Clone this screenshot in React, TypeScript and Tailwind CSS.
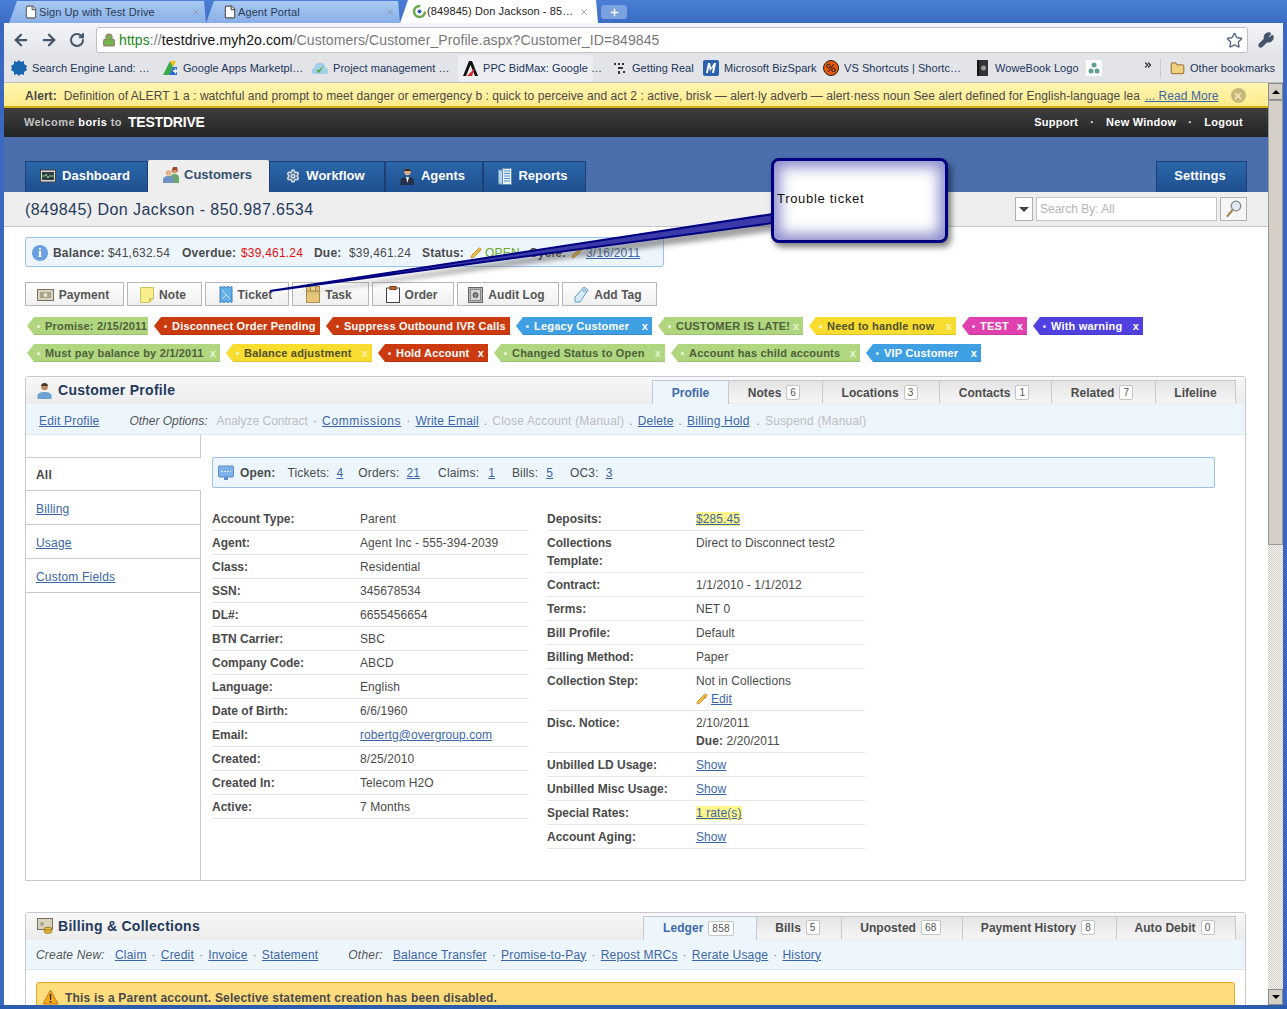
import React from "react";
import { ArrowLeft, ArrowRight, RotateCw, Star, Wrench, Settings, Plus, X, Pencil, File, Lock, Folder, ChevronsRight } from "lucide-react";

const Link = ({ children, className = "" }: { children: React.ReactNode; className?: string }) => (
  <span className={`text-[#3a66a8] underline ${className}`}>{children}</span>
);

const ChromeTab = ({ w, pl, active, icon, label, close }: { w: string; pl: string; active?: boolean; icon: React.ReactNode; label: string; close: string }) => (
  <div className={`${w} ${pl} flex shrink-0 items-center text-[11px] tracking-[0.1px] [clip-path:polygon(0_100%,8px_0,calc(100%-2px)_0,100%_100%)] ${active ? "h-[23px] bg-white text-[#222]" : "h-[22px] bg-gradient-to-b from-[#a9c9f2] to-[#88afe6] text-[#2b3a55]"}`}>
    <span className="flex w-[16px] shrink-0 justify-center">{icon}</span>
    <span className="truncate">{label}</span>
    <X size={10} strokeWidth={2} className={`ml-auto ${close} shrink-0 text-[#8a98ac]`} />
  </div>
);

const Bookmark = ({ w, icon, label, className = "" }: { w: string; icon: React.ReactNode; label: string; className?: string }) => (
  <div className={`${w} flex shrink-0 items-center gap-[5px] whitespace-nowrap text-[11px] tracking-[0.05px] text-[#20345a] ${className}`}>
    <span className="flex w-[16px] shrink-0 justify-center">{icon}</span>
    {label && <span>{label}</span>}
  </div>
);

const NavTab = ({ w, icon, label, active }: { w: string; icon: React.ReactNode; label: string; active?: boolean }) => (
  <div className={`${w} flex shrink-0 items-center justify-center gap-[6px] pb-[2px] pr-[3px] text-[13px] font-bold ${active ? "h-[32px] rounded-t-[2px] bg-[#eeeeee] text-[#35506f]" : "h-[31px] border border-b-0 border-[#1d3f72] bg-gradient-to-b from-[#2b67a9] to-[#1f4f90] text-white"}`}>
    {icon}
    <span>{label}</span>
  </div>
);

const ActionBtn = ({ w, icon, label }: { w: string; icon: React.ReactNode; label: string }) => (
  <div className={`${w} flex h-[24px] shrink-0 items-center justify-center gap-[5px] border border-[#bbb6b6] bg-gradient-to-b from-white to-[#f0f0f0] pr-[3px] pt-[1px] text-[12px] font-bold tracking-[0.05px] text-[#555]`}>
    {icon}
    <span>{label}</span>
  </div>
);

const Tag = ({ w, label, color, x }: { w: string; label: string; color: string; x?: string }) => (
  <div className={`${w} ${color} flex h-[18px] shrink-0 items-center whitespace-nowrap border-b border-black/10 pt-[1px] text-[11px] font-bold tracking-[0.2px] [clip-path:polygon(7px_0,100%_0,100%_100%,7px_100%,0_50%)]`}>
    <span className="ml-[10px] h-[3px] w-[3px] shrink-0 rounded-full bg-white/80" />
    <span className="ml-[5px]">{label}</span>
    {x && <span className={`ml-auto mr-[4px] ${x}`}>x</span>}
  </div>
);

const Badge = ({ n }: { n: string }) => (
  <span className="ml-[5px] flex h-[15px] items-center rounded-[2px] border border-[#c4c4c4] bg-white px-[3px] text-[10px] font-normal tracking-[0.3px] text-[#555]">{n}</span>
);

const PanelTab = ({ w, label, n, active, high }: { w: string; label: string; n?: string; active?: boolean; high?: boolean }) => (
  <div className={`${w} flex shrink-0 items-center justify-center border-r border-[#c8c8d0] text-[12px] font-bold tracking-[0.05px] ${high ? "pb-[1px]" : "pt-[1px]"} ${n ? "pr-[3px]" : ""} ${active ? "h-[24px] border-l border-t bg-[#eef6fd] text-[#3f6aa8]" : "h-[23px] border-t bg-gradient-to-b from-[#e4e4e4] to-[#f6f6f6] text-[#4c4c4c]"}`}>
    <span>{label}</span>
    {n && <Badge n={n} />}
  </div>
);

const Row = ({ label, value, tall, w, lw }: { label: React.ReactNode; value: React.ReactNode; tall?: boolean; w: string; lw: string }) => (
  <div className={`${w} flex border-b border-[#e6e6e6] text-[12px] leading-[18px] tracking-[0.09px] text-[#4a4a4a] ${tall ? "h-[42px] pt-[3px]" : "h-[24px] pt-[3px]"}`}>
    <div className={`${lw} shrink-0 pr-[4px] font-bold tracking-[0px]`}>{label}</div>
    <div>{value}</div>
  </div>
);

const Sep = ({ c = "·" }: { c?: string }) => <span className="mx-[5px] text-[#888]">{c}</span>;

const MonitorIcon = () => (
  <svg width="16" height="14" viewBox="0 0 16 14"><rect x="0.500" y="1" width="15" height="12" fill="#d8d8d8" stroke="#444" /><rect x="2" y="3" width="12" height="8" fill="#2f3d3f" /><path d="M2 7h3l1-2 2 4 1-2h5" fill="none" stroke="#7fd08c" /></svg>
);
const PeopleIcon = () => (
  <svg width="19" height="18" viewBox="0 0 19 18"><circle cx="12.500" cy="4.500" r="3" fill="#d99a6c" /><path d="M11 1h4l1 5-2-2h-2l-2 2z" fill="#9a4a2a" /><path d="M8 17v-5c0-3 2-4 4.500-4S17 9 17 12v5z" fill="#68a86a" /><circle cx="6.500" cy="7" r="2.800" fill="#e0b088" /><path d="M1 17v-3c0-3 2-4 5.500-4S12 11 12 14v3z" fill="#6f94c4" /></svg>
);
const AgentIcon = () => (
  <svg width="15" height="17" viewBox="0 0 15 17"><circle cx="7.500" cy="4" r="3.200" fill="#e0ae88" /><path d="M4 3c0-3 7-3 7 0z" fill="#332" /><path d="M0.500 17v-4c0-3 3-4 7-4s6.500 1 6.500 4v4z" fill="#27304a" /><path d="M6 9h3l-1.500 6z" fill="#fff" /></svg>
);
const ReportIcon = () => (
  <svg width="14" height="17" viewBox="0 0 14 17"><rect x="0.500" y="2" width="4" height="14" fill="#b7d4ec" stroke="#6c96bb" /><rect x="4.500" y="0.500" width="9" height="16" fill="#e8f2fa" stroke="#5f8fb8" /><path d="M6 3h6M6 5.500h6M6 8h6M6 10.500h6M6 13h6" stroke="#4f8fc8" strokeWidth="1.200" /></svg>
);
const CashIcon = () => (
  <svg width="17" height="12" viewBox="0 0 17 12"><rect x="0.500" y="0.500" width="16" height="11" fill="#d9d3bd" stroke="#77725f" /><rect x="3" y="3" width="11" height="6" fill="#a9a489" /><circle cx="8.500" cy="6" r="2" fill="#e8e4d2" /></svg>
);
const NoteIcon = () => (
  <svg width="14" height="16" viewBox="0 0 14 16"><path d="M0.500 0.500h13v11l-4 4h-9z" fill="#f8ee8c" stroke="#cfc25c" /><path d="M9.500 15.500v-4h4" fill="#e0d468" stroke="#cfc25c" /></svg>
);
const TicketIcon = () => (
  <svg width="14" height="17" viewBox="0 0 14 17"><path d="M1 .5l2 1 2-1 2 1 2-1 2 1 2-1v16l-2-1-2 1-2-1-2 1-2-1-2 1z" fill="#62aee8" stroke="#3f7fb8" /><path d="M3 4l8 9M3 13l4-4" stroke="#cbe6fa" /></svg>
);
const TaskIcon = () => (
  <svg width="14" height="17" viewBox="0 0 14 17"><rect x="0.500" y="0.500" width="13" height="16" fill="#e8c878" stroke="#a98e4c" /><path d="M0.500 5h13" stroke="#a98e4c" /><path d="M4.500 0.500v4.500h5v-4.500" fill="#f3dc9c" stroke="#a98e4c" /></svg>
);
const OrderIcon = () => (
  <svg width="14" height="17" viewBox="0 0 14 17"><rect x="0.500" y="2" width="13" height="14.500" fill="#fff" stroke="#444" /><rect x="4" y="0.500" width="6" height="3" fill="#c9672a" stroke="#7a3c16" /></svg>
);
const SafeIcon = () => (
  <svg width="15" height="16" viewBox="0 0 15 16"><rect x="0.500" y="0.500" width="14" height="15" fill="#b5b5b5" stroke="#666" /><rect x="2.500" y="2.500" width="10" height="11" fill="#d6d6d6" stroke="#888" /><circle cx="7.500" cy="8" r="2.500" fill="#8a8a8a" stroke="#555" /></svg>
);
const TagIcon = () => (
  <svg width="15" height="17" viewBox="0 0 15 17"><path d="M10 1l4 3-8 12-5 0 0-5z" fill="#d6ecfa" stroke="#5f9ccc" /><circle cx="10.500" cy="4.500" r="1.200" fill="#fff" stroke="#5f9ccc" /></svg>
);
const ProfileIcon = () => (
  <svg width="15" height="16" viewBox="0 0 15 16"><circle cx="7.500" cy="4" r="3.300" fill="#b98a62" /><path d="M4 3c0-4 7-4 7 0z" fill="#4a3526" /><path d="M0.500 16v-3c0-3 3-4 7-4s7 1 7 4v3z" fill="#6ea3cf" /></svg>
);
const BillingIcon = () => (
  <svg width="16" height="16" viewBox="0 0 16 16"><rect x="0.500" y="0.500" width="15" height="11" fill="#d9d3bd" stroke="#77725f" /><circle cx="5" cy="6" r="2" fill="#a9a489" /><ellipse cx="11" cy="11" rx="4" ry="1.800" fill="#e5b93f" stroke="#a67e1c" /><ellipse cx="11" cy="13.500" rx="4" ry="1.800" fill="#e5b93f" stroke="#a67e1c" /></svg>
);
const GreenPencil = () => <Pencil size={12} strokeWidth={1.500} className="shrink-0 fill-[#f0c040] text-[#c07a20]" />;

export default function App() {
  return (
    <div className="relative flex h-[1009px] w-[1287px] flex-col overflow-hidden bg-[#3a68c0] font-['Liberation_Sans',Arial,sans-serif]">
      {/* Chrome tab strip */}
      <div className="flex h-[23px] shrink-0 items-end bg-gradient-to-b from-[#4a7ed4] to-[#3a6cc4] pl-[9px]">
        <ChromeTab w="w-[197px]" pl="pl-[14px]" icon={<File size={14} className="fill-white text-[#666]" />} label="Sign Up with Test Drive" close="mr-[5px]" />
        <ChromeTab w="w-[194px]" pl="pl-[16px]" icon={<File size={14} className="fill-white text-[#555]" />} label="Agent Portal" close="mr-[5px]" />
        <ChromeTab
          w="w-[198px]"
          pl="pl-[11px]"
          active
          icon={
            <svg width="15" height="15" viewBox="0 0 15 15"><circle cx="7.500" cy="7.500" r="5.500" fill="none" stroke="#6aa84a" strokeWidth="2.500" strokeDasharray="26 8" /><circle cx="7.500" cy="7.500" r="2" fill="#2a62b8" /></svg>
          }
          label="(849845) Don Jackson - 85…"
          close="mr-[9px]"
        />
        <div className="mb-[4px] ml-[3px] flex h-[14px] w-[26px] items-center justify-center rounded-[3px] bg-[#7aa2e0]">
          <Plus size={11} strokeWidth={3} className="text-white" />
        </div>
      </div>

      {/* Window inner */}
      <div className="mx-[4px] flex min-h-0 flex-1 flex-col">
        {/* Toolbar */}
        <div className="flex h-[31px] shrink-0 items-center bg-gradient-to-b from-[#f4f5f8] to-[#e4e5ea] pt-[3px]">
          <ArrowLeft size={18} strokeWidth={3} className="ml-[8px] text-[#44546a]" />
          <ArrowRight size={18} strokeWidth={3} className="ml-[10px] text-[#44546a]" />
          <RotateCw size={16} strokeWidth={3} className="ml-[11px] text-[#44546a]" />
          <div className="ml-[11px] flex h-[26px] w-[1152px] items-center rounded-[3px] border border-[#bcc0c8] bg-white">
            <Lock size={14} strokeWidth={2.500} className="ml-[5px] fill-[#74b84c] text-[#8a8a6a]" />
            <div className="ml-[3px] whitespace-nowrap pt-[1px] text-[14px] tracking-[0.09px] text-[#777]">
              <span className="text-[#1a8a1a]">https</span>
              <span>://</span>
              <span className="text-[#111]">testdrive.myh2o.com</span>
              <span>/Customers/Customer_Profile.aspx?Customer_ID=849845</span>
            </div>
            <Star size={17} strokeWidth={2} className="ml-auto mr-[4px] text-[#5a6a80]" />
          </div>
          <Wrench size={16} strokeWidth={3} className="ml-[10px] fill-[#44546a] text-[#44546a]" />
        </div>

        {/* Bookmarks */}
        <div className="flex h-[29px] shrink-0 items-center border-b border-[#bdbdbd] bg-[#e3e4e8] pl-[7px]">
          <Bookmark w="w-[151px]" label="Search Engine Land: …" icon={<svg width="16" height="16" viewBox="0 0 16 16"><path d="M8 0l2 2 3-1 0 3 3 2-1 2 1 2-3 2 0 3-3-1-2 2-2-2-3 1 0-3-3-2 1-2-1-2 3-2 0-3 3 1z" fill="#1a66b0" /></svg>} />
          <Bookmark w="w-[150px]" label="Google Apps Marketpl…" icon={<svg width="16" height="16" viewBox="0 0 16 16"><path d="M1 15l7-14 3 6-4 8z" fill="#3aa84a" /><path d="M8 1h6l-3 6z" fill="#f4c20d" /><path d="M7 15l4-8h4v8z" fill="#2a6ad0" /><path d="M11 11h5M13.500 8.500v5" stroke="#fff" strokeWidth="1.500" /></svg>} />
          <Bookmark w="w-[146px]" label="Project management …" icon={<svg width="16" height="14" viewBox="0 0 16 14"><path d="M3 13a3 3 0 01-.5-6 5.500 5.500 0 0111 0 3 3 0 01-.5 6z" fill="#9fd0e6" /><path d="M4 9l3 3 5-7-5 4z" fill="#5aa83a" /></svg>} />
          <Bookmark w="w-[135px]" className="h-[27px] rounded-[3px] bg-[#eceef2] pl-[4px]" label="PPC BidMax: Google …" icon={<svg width="15" height="15" viewBox="0 0 15 15"><path d="M0 15L6 0h3l6 15h-3L7.500 4 3 15z" fill="#111" /><path d="M4 15l8-8-3 8z" fill="#d22" /></svg>} />
          <Bookmark w="w-[110px]" className="pl-[18px]" label="Getting Real" icon={<svg width="13" height="13" viewBox="0 0 13 13"><path d="M1 1h2v2H1zM5 1h2v2H5zM9 1h2v2H9zM5 5h5v2H5zM5 9h2v3H5zM10 9h2v2h-2z" fill="#333" /></svg>} />
          <Bookmark w="w-[120px]" label="Microsoft BizSpark" icon={<svg width="16" height="16" viewBox="0 0 16 16"><rect width="16" height="16" rx="2" fill="#2a62b0" /><path d="M3 13l2-10h2l1 5 3-5h2l-2 10h-2l1-6-3 4-1-4-1 6z" fill="#fff" /></svg>} />
          <Bookmark w="w-[151px]" label="VS Shortcuts | Shortc…" icon={<svg width="16" height="16" viewBox="0 0 16 16"><circle cx="8" cy="8" r="7.500" fill="#e85a08" stroke="#222" /><circle cx="5.500" cy="6" r="1.800" fill="none" stroke="#222" /><circle cx="10.500" cy="10" r="1.800" fill="none" stroke="#222" /><path d="M11 4L5 12" stroke="#222" /></svg>} />
          <Bookmark w="w-[112px]" label="WoweBook Logo" icon={<svg width="13" height="16" viewBox="0 0 13 16"><rect x="1" width="11" height="16" fill="#333" /><rect x="1" width="2" height="16" fill="#111" /><circle cx="7.500" cy="8" r="2.500" fill="#999" /></svg>} />
          <Bookmark w="w-[57px]" label="" icon={<svg width="16" height="16" viewBox="0 0 16 16"><rect width="16" height="16" fill="#fff" /><circle cx="8" cy="5" r="2.500" fill="#5f9f94" /><circle cx="5" cy="11" r="2.500" fill="#5f9f94" /><circle cx="11" cy="11" r="2.500" fill="#5f9f94" /></svg>} />
          <ChevronsRight size={10} strokeWidth={3} className="mb-[6px] text-[#222]" />
          <div className="ml-[7px] mr-[8px] h-[19px] w-px bg-[#c9c9cc]" />
          <Bookmark w="w-[106px]" label="Other bookmarks" icon={<Folder size={15} className="fill-[#f5cf80] text-[#a08248]" />} />
        </div>

        {/* Viewport */}
        <div className="flex min-h-0 flex-1">
          <div className="flex min-w-0 flex-1 flex-col overflow-hidden bg-white">
            {/* Alert */}
            <div className="flex h-[25px] shrink-0 items-center whitespace-nowrap border-b-2 border-[#d9ad12] bg-gradient-to-b from-[#fff6b0] to-[#ffeb8c] pl-[21px] pt-[2px] text-[12px] tracking-[0.07px] text-[#4a4a4a]">
              <span className="mr-[7px] font-bold">Alert:</span>
              <span>Definition of ALERT 1 a : watchful and prompt to meet danger or emergency b : quick to perceive and act 2 : active, brisk — alert·ly adverb — alert·ness noun See alert defined for English-language lea</span>
              <span className="ml-[5px] text-[#3a66a8] underline">... Read More</span>
              <span className="ml-[12px] flex h-[15px] w-[15px] items-center justify-center rounded-full bg-[#c8b878]">
                <X size={10} strokeWidth={3.500} className="text-[#f4eed0]" />
              </span>
            </div>
            {/* Dark bar */}
            <div className="flex h-[29px] shrink-0 items-center bg-gradient-to-b from-[#3e3e3e] to-[#232425] pl-[20px] pr-[25px]">
              <span className="text-[11px] font-bold tracking-[0.4px] text-[#c4c4c4]">Welcome <span className="text-white">boris</span> to</span>
              <span className="ml-[6px] text-[14px] font-bold tracking-[-0.2px] text-white">TESTDRIVE</span>
              <div className="ml-auto flex items-center text-[11px] font-bold tracking-[0.25px] text-white">
                <span>Support</span>
                <span className="mx-[12px]">·</span>
                <span>New Window</span>
                <span className="mx-[12px]">·</span>
                <span>Logout</span>
              </div>
            </div>
            {/* Blue band with nav tabs */}
            <div className="flex h-[55px] shrink-0 items-end bg-[#4a6fac] pl-[21px] pr-[21px]">
              <NavTab w="w-[123px]" label="Dashboard" icon={<MonitorIcon />} />
              <NavTab w="w-[121px]" active label="Customers" icon={<span className="-mr-[3px] flex"><PeopleIcon /></span>} />
              <NavTab w="w-[116px]" label="Workflow" icon={<Settings size={14} strokeWidth={3} className="text-[#d8d8d8]" />} />
              <NavTab w="w-[98px]" label="Agents" icon={<AgentIcon />} />
              <NavTab w="w-[103px]" label="Reports" icon={<ReportIcon />} />
              <div className="ml-auto">
                <NavTab w="w-[91px]" label="Settings" icon={null} />
              </div>
            </div>
            {/* Title bar */}
            <div className="flex h-[35px] shrink-0 items-center border-b border-[#c9c7cc] bg-[#eeeeee] pl-[21px] pr-[21px]">
              <span className="pt-[1px] text-[16px] tracking-[0.44px] text-[#1f3a5c]">(849845) Don Jackson - 850.987.6534</span>
              <div className="ml-auto flex items-center">
                <div className="flex h-[24px] w-[18px] items-center justify-center border border-[#b5b0b0] bg-white">
                  <span className="h-0 w-0 border-x-[5px] border-t-[5px] border-x-transparent border-t-[#444]" />
                </div>
                <div className="ml-[3px] flex h-[24px] w-[181px] items-center border border-[#c8c4c4] bg-white pl-[3px] text-[12px] text-[#b5b5b5]">Search By: All</div>
                <div className="ml-[3px] flex h-[24px] w-[27px] items-center justify-center border border-[#b5b0b0] bg-[#f6f6f6]">
                  <svg width="16" height="18" viewBox="0 0 16 18"><circle cx="10" cy="6" r="4.800" fill="#dfeaf2" stroke="#8b8b8b" strokeWidth="1.300" /><path d="M6.500 10L1.500 16" stroke="#a88a5a" strokeWidth="2.200" strokeLinecap="round" /></svg>
                </div>
              </div>
            </div>

            {/* Body */}
            <div className="flex flex-col pl-[21px] pr-[21px]">
              {/* Info */}
              <div className="mt-[10px] flex h-[30px] w-[639px] items-center whitespace-nowrap rounded-[3px] border border-[#9cc2ea] bg-[#eef6fd] pl-[6px] pt-[1px] text-[12px] tracking-[0.2px] text-[#4a4a4a]">
                <span className="flex h-[16px] w-[16px] shrink-0 items-center justify-center rounded-full bg-[#6c9fe0] font-['Liberation_Serif',serif] text-[13px] font-bold text-white">i</span>
                <b className="ml-[5px] w-[55px] shrink-0">Balance:</b>
                <span className="w-[74px] shrink-0">$41,632.54</span>
                <b className="w-[59px] shrink-0">Overdue:</b>
                <span className="w-[73px] shrink-0 text-[#e01010]">$39,461.24</span>
                <b className="w-[35px] shrink-0">Due:</b>
                <span className="w-[73px] shrink-0">$39,461.24</span>
                <b className="w-[48px] shrink-0">Status:</b>
                <span className="w-[15px] shrink-0"><GreenPencil /></span>
                <span className="w-[44px] shrink-0 text-[#6aa82a]">OPEN</span>
                <b className="w-[42px] shrink-0">Cycle:</b>
                <span className="w-[15px] shrink-0"><GreenPencil /></span>
                <Link>3/16/2011</Link>
              </div>
              {/* Actions */}
              <div className="mt-[15px] flex gap-[3px]">
                <ActionBtn w="w-[99px]" icon={<CashIcon />} label="Payment" />
                <ActionBtn w="w-[75px]" icon={<NoteIcon />} label="Note" />
                <ActionBtn w="w-[84px]" icon={<TicketIcon />} label="Ticket" />
                <ActionBtn w="w-[77px]" icon={<TaskIcon />} label="Task" />
                <ActionBtn w="w-[82px]" icon={<OrderIcon />} label="Order" />
                <ActionBtn w="w-[102px]" icon={<SafeIcon />} label="Audit Log" />
                <ActionBtn w="w-[95px]" icon={<TagIcon />} label="Add Tag" />
              </div>
              {/* Tags */}
              <div className="ml-[2px] mt-[11px] flex gap-[6px]">
                <Tag w="w-[121px]" color="bg-[#b0d67f] text-[#4f5f3a]" label="Promise: 2/15/2011" />
                <Tag w="w-[166px]" color="bg-[#cc3a10] text-white" label="Disconnect Order Pending" />
                <Tag w="w-[184px]" color="bg-[#cc3a10] text-white" label="Suppress Outbound IVR Calls" />
                <Tag w="w-[136px]" color="bg-[#3f9fe3] text-white" label="Legacy Customer" x="text-white" />
                <Tag w="w-[145px]" color="bg-[#b0d67f] text-[#4f5f3a]" label="CUSTOMER IS LATE!" x="text-[#e6f3d2]" />
                <Tag w="w-[147px]" color="bg-[#f8dc30] text-[#50502a]" label="Need to handle now" x="text-[#fdf3b0]" />
                <Tag w="w-[65px]" color="bg-[#e040b0] text-white" label="TEST" x="text-white" />
                <Tag w="w-[110px]" color="bg-[#5040e0] text-white" label="With warning" x="text-white" />
              </div>
              <div className="ml-[2px] mt-[9px] flex gap-[6px]">
                <Tag w="w-[193px]" color="bg-[#b0d67f] text-[#4f5f3a]" label="Must pay balance by 2/1/2011" x="text-[#e6f3d2]" />
                <Tag w="w-[146px]" color="bg-[#f8dc30] text-[#50502a]" label="Balance adjustment" x="text-[#fdf3b0]" />
                <Tag w="w-[110px]" color="bg-[#cc3a10] text-white" label="Hold Account" x="text-white" />
                <Tag w="w-[171px]" color="bg-[#b0d67f] text-[#4f5f3a]" label="Changed Status to Open" x="text-[#e6f3d2]" />
                <Tag w="w-[189px]" color="bg-[#b0d67f] text-[#4f5f3a]" label="Account has child accounts" x="text-[#e6f3d2]" />
                <Tag w="w-[115px]" color="bg-[#3f9fe3] text-white" label="VIP Customer" x="text-white" />
              </div>

              {/* Customer Profile panel */}
              <div className="mt-[14px] flex h-[505px] w-[1221px] shrink-0 flex-col rounded-t-[3px] border border-[#c8c8d0]">
                <div className="flex h-[27px] shrink-0 items-end bg-gradient-to-b from-[#f8f8f8] to-[#ececec] pr-[9px]">
                  <div className="flex h-full items-center gap-[6px] pl-[11px] text-[14px] font-bold tracking-[0.28px] text-[#1f3a5c]">
                    <ProfileIcon />
                    <span>Customer Profile</span>
                  </div>
                  <div className="ml-auto flex">
                    <PanelTab w="w-[77px]" active label="Profile" />
                    <PanelTab w="w-[94px]" label="Notes" n="6" />
                    <PanelTab w="w-[117px]" label="Locations" n="3" />
                    <PanelTab w="w-[112px]" label="Contacts" n="1" />
                    <PanelTab w="w-[104px]" label="Related" n="7" />
                    <PanelTab w="w-[80px]" label="Lifeline" />
                  </div>
                </div>
                <div className="flex h-[31px] shrink-0 items-center whitespace-nowrap border-b border-[#dfe6ec] bg-[#eef6fd] pl-[13px] pt-[3px] text-[12px] tracking-[0.2px] text-[#bdbdbd]">
                  <Link>Edit Profile</Link>
                  <span className="ml-[30px] mr-[9px] italic tracking-[0px] text-[#555]">Other Options:</span>
                  <span className="tracking-[0px]">Analyze Contract</span>
                  <Sep />
                  <Link className="tracking-[0.65px]">Commissions</Link>
                  <Sep />
                  <Link>Write Email</Link>
                  <Sep c="." />
                  <span>Close Account (Manual)</span>
                  <Sep c="." />
                  <Link>Delete</Link>
                  <Sep c="." />
                  <Link className="mr-[2px]">Billing Hold</Link>
                  <Sep c="." />
                  <span>Suspend (Manual)</span>
                </div>
                <div className="flex min-h-0 flex-1">
                  {/* Sidebar */}
                  <div className="flex w-[175px] shrink-0 flex-col text-[12px] tracking-[0.2px]">
                    <div className="h-[23px] border-b border-r border-[#c8c8d0]" />
                    <div className="flex h-[33px] items-center border-b border-[#c8c8d0] pl-[10px] pt-[2px] font-bold text-[#444]">All</div>
                    <div className="flex h-[34px] items-center border-b border-r border-[#c8c8d0] pl-[10px] pt-[2px]"><Link>Billing</Link></div>
                    <div className="flex h-[34px] items-center border-b border-r border-[#c8c8d0] pl-[10px] pt-[2px]"><Link>Usage</Link></div>
                    <div className="flex h-[34px] items-center border-b border-r border-[#c8c8d0] pl-[10px] pt-[2px]"><Link>Custom Fields</Link></div>
                    <div className="flex-1 border-r border-[#c8c8d0]" />
                  </div>
                  {/* Main */}
                  <div className="min-w-0 flex-1 pl-[11px]">
                    <div className="mt-[22px] flex h-[31px] w-[1003px] items-center rounded-[2px] border border-[#9cc2ea] bg-[#eef6fd] pl-[5px] text-[12px] tracking-[0.15px] text-[#4a4a4a]">
                      <svg width="16" height="16" viewBox="0 0 16 16"><rect x="0.500" y="1" width="15" height="11" rx="1" fill="#7fb2e8" stroke="#5a8fc8" /><path d="M3 6.500h10" stroke="#dceeff" strokeDasharray="2 1" /><path d="M6 12h4v3H6z" fill="#5a8fc8" /></svg>
                      <b className="ml-[6px]">Open:</b>
                      <span className="ml-[12px]">Tickets:</span>
                      <Link className="ml-[7px]">4</Link>
                      <span className="ml-[15px]">Orders:</span>
                      <Link className="ml-[7px]">21</Link>
                      <span className="ml-[18px]">Claims:</span>
                      <Link className="ml-[9px]">1</Link>
                      <span className="ml-[17px]">Bills:</span>
                      <Link className="ml-[8px]">5</Link>
                      <span className="ml-[17px]">OC3:</span>
                      <Link className="ml-[7px]">3</Link>
                    </div>
                    <div className="mt-[19px] flex gap-[18px]">
                      <div className="flex flex-col">
                        <Row w="w-[317px]" lw="w-[148px]" label="Account Type:" value="Parent" />
                        <Row w="w-[317px]" lw="w-[148px]" label="Agent:" value="Agent Inc - 555-394-2039" />
                        <Row w="w-[317px]" lw="w-[148px]" label="Class:" value="Residential" />
                        <Row w="w-[317px]" lw="w-[148px]" label="SSN:" value="345678534" />
                        <Row w="w-[317px]" lw="w-[148px]" label="DL#:" value="6655456654" />
                        <Row w="w-[317px]" lw="w-[148px]" label="BTN Carrier:" value="SBC" />
                        <Row w="w-[317px]" lw="w-[148px]" label="Company Code:" value="ABCD" />
                        <Row w="w-[317px]" lw="w-[148px]" label="Language:" value="English" />
                        <Row w="w-[317px]" lw="w-[148px]" label="Date of Birth:" value="6/6/1960" />
                        <Row w="w-[317px]" lw="w-[148px]" label="Email:" value={<Link>robertg@overgroup.com</Link>} />
                        <Row w="w-[317px]" lw="w-[148px]" label="Created:" value="8/25/2010" />
                        <Row w="w-[317px]" lw="w-[148px]" label="Created In:" value="Telecom H2O" />
                        <Row w="w-[317px]" lw="w-[148px]" label="Active:" value="7 Months" />
                      </div>
                      <div className="flex flex-col">
                        <Row w="w-[318px]" lw="w-[149px]" label="Deposits:" value={<span className="bg-[#fff58a] text-[#3a66a8] underline">$285.45</span>} />
                        <Row w="w-[318px]" lw="w-[149px]" tall label={<>Collections<br />Template:</>} value="Direct to Disconnect test2" />
                        <Row w="w-[318px]" lw="w-[149px]" label="Contract:" value="1/1/2010 - 1/1/2012" />
                        <Row w="w-[318px]" lw="w-[149px]" label="Terms:" value="NET 0" />
                        <Row w="w-[318px]" lw="w-[149px]" label="Bill Profile:" value="Default" />
                        <Row w="w-[318px]" lw="w-[149px]" label="Billing Method:" value="Paper" />
                        <Row w="w-[318px]" lw="w-[149px]" tall label="Collection Step:" value={<>Not in Collections<br /><span className="inline-flex h-[18px] items-center gap-[3px] align-top"><GreenPencil /><Link>Edit</Link></span></>} />
                        <Row w="w-[318px]" lw="w-[149px]" tall label="Disc. Notice:" value={<>2/10/2011<br /><b>Due:</b> 2/20/2011</>} />
                        <Row w="w-[318px]" lw="w-[149px]" label="Unbilled LD Usage:" value={<Link>Show</Link>} />
                        <Row w="w-[318px]" lw="w-[149px]" label="Unbilled Misc Usage:" value={<Link>Show</Link>} />
                        <Row w="w-[318px]" lw="w-[149px]" label="Special Rates:" value={<span className="bg-[#fff58a] text-[#3a66a8] underline">1 rate(s)</span>} />
                        <Row w="w-[318px]" lw="w-[149px]" label="Account Aging:" value={<Link>Show</Link>} />
                      </div>
                    </div>
                  </div>
                </div>
              </div>

              {/* Billing panel */}
              <div className="mt-[31px] flex w-[1221px] shrink-0 flex-col rounded-t-[3px] border border-[#c8c8d0]">
                <div className="flex h-[27px] shrink-0 items-end bg-gradient-to-b from-[#f8f8f8] to-[#ececec] pr-[9px]">
                  <div className="flex h-full items-center gap-[5px] pb-[1px] pl-[11px] text-[14px] font-bold tracking-[0.28px] text-[#1f3a5c]">
                    <BillingIcon />
                    <span>Billing &amp; Collections</span>
                  </div>
                  <div className="ml-auto flex">
                    <PanelTab w="w-[114px]" high active label="Ledger" n="858" />
                    <PanelTab w="w-[85px]" high label="Bills" n="5" />
                    <PanelTab w="w-[121px]" high label="Unposted" n="68" />
                    <PanelTab w="w-[154px]" high label="Payment History" n="8" />
                    <PanelTab w="w-[119px]" high label="Auto Debit" n="0" />
                  </div>
                </div>
                <div className="flex h-[30px] shrink-0 items-center whitespace-nowrap border-b border-[#dfe6ec] bg-[#eef6fd] pl-[10px] text-[12px] tracking-[0.2px]">
                  <span className="mr-[10px] italic text-[#555]">Create New:</span>
                  <Link>Claim</Link><Sep />
                  <Link>Credit</Link><Sep />
                  <Link>Invoice</Link><Sep />
                  <Link>Statement</Link>
                  <span className="ml-[30px] mr-[10px] italic text-[#555]">Other:</span>
                  <Link>Balance Transfer </Link><Sep />
                  <Link>Promise-to-Pay</Link><Sep />
                  <Link>Repost MRCs</Link><Sep />
                  <Link>Rerate Usage</Link><Sep />
                  <Link>History</Link>
                </div>
                <div className="pl-[10px] pt-[12px]">
                  <div className="flex h-[40px] w-[1199px] items-start rounded-t-[3px] border border-[#e8a820] bg-[#ffdc7c] pl-[5px] pt-[6px] text-[12px] font-bold tracking-[0.2px] text-[#4a4a4a]">
                    <svg width="17" height="16" viewBox="0 0 17 16"><path d="M8.500 1L16 15H1z" fill="#f4a81c" stroke="#c87a10" /><path d="M7.700 5h1.600l-.3 6H8z M7.700 12h1.600v1.600H7.700z" fill="#222" /></svg>
                    <span className="ml-[6px]">This is a Parent account. Selective statement creation has been disabled.</span>
                  </div>
                </div>
              </div>
            </div>
          </div>

          {/* Scrollbar */}
          <div className="flex w-[15px] shrink-0 flex-col bg-[#e4e2dc]">
            <div className="flex h-[17px] shrink-0 items-center justify-center border border-[#888] bg-[#d4d0c8]">
              <span className="h-0 w-0 border-x-[4px] border-b-[4px] border-x-transparent border-b-black" />
            </div>
            <div className="h-[445px] shrink-0 border border-[#999] bg-[#d4d0c8]" />
            <div className="flex-1 bg-[repeating-conic-gradient(#d4d0c8_0%_25%,#f5f5f2_0%_50%)] bg-[length:2px_2px]" />
            <div className="flex h-[16px] shrink-0 items-center justify-center border border-[#888] bg-[#d4d0c8]">
              <span className="h-0 w-0 border-x-[4px] border-t-[4px] border-x-transparent border-t-black" />
            </div>
          </div>
        </div>
      </div>
      <div className="h-[4px] shrink-0 bg-[#2c5cae]" />

      {/* Callout annotation */}
      <svg className="pointer-events-none absolute left-0 top-0" width="1287" height="1009" viewBox="0 0 1287 1009">
        <defs>
          <filter id="sh" x="-10%" y="-10%" width="120%" height="130%"><feGaussianBlur stdDeviation="2.500" /></filter>
        </defs>
        <polygon points="775,219 775,231 274,297" fill="#555" opacity="0.55" filter="url(#sh)" />
        <polygon points="773,214 773,223 270,291" fill="#3a3aa8" stroke="#000080" strokeWidth="2" />
      </svg>
      <div className="absolute left-[771px] top-[158px] flex h-[85px] w-[177px] items-start rounded-[8px] border-[3px] border-[#000080] bg-white pl-[3px] pt-[30px] text-[13px] leading-[16px] tracking-[0.7px] text-[#111] shadow-[inset_0_0_14px_6px_rgba(90,90,184,0.7),3px_4px_6px_rgba(0,0,0,0.5)]">
        Trouble ticket
      </div>
    </div>
  );
}
